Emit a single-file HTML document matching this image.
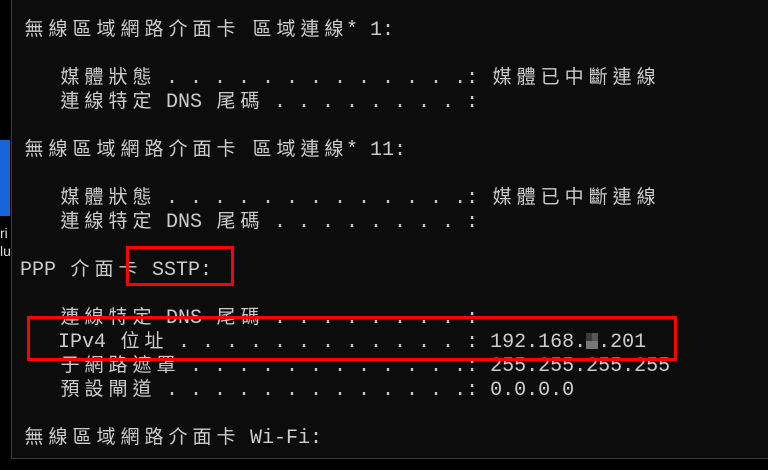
<!DOCTYPE html>
<html><head><meta charset="utf-8"><style>
*{margin:0;padding:0}
body{width:768px;height:470px;background:#000;position:relative;overflow:hidden;font-family:"Liberation Mono",monospace;}
#t{position:absolute;left:11px;top:0;width:757px;height:458px;background:#0c0c0c;border-left:1px solid #3a3a3a;border-bottom:1px solid #3a3a3a;}
.l{position:absolute;left:22px;height:24px;line-height:24px;font-size:20px;color:#cccccc;white-space:pre;}
.c{display:inline-block;width:24px;text-align:center;font-family:"Noto Sans CJK TC","Noto Sans CJK SC",sans-serif;font-size:19px;}
.box{position:absolute;border:3px solid #ff0000;box-sizing:border-box;}
</style></head><body>
<div style="position:absolute;left:0;top:140px;width:10px;height:76px;background:#1565d8"></div>
<div style="position:absolute;left:0;top:224px;font:14px 'Liberation Sans',sans-serif;color:#ddd;line-height:18px">ri<br>lu</div>
<div id="t"></div>
<div class="l" style="top:16px"><span class="c">無</span><span class="c">線</span><span class="c">區</span><span class="c">域</span><span class="c">網</span><span class="c">路</span><span class="c">介</span><span class="c">面</span><span class="c">卡</span> <span class="c">區</span><span class="c">域</span><span class="c">連</span><span class="c">線</span>* 1:</div>
<div class="l" style="top:64px">   <span class="c">媒</span><span class="c">體</span><span class="c">狀</span><span class="c">態</span> . . . . . . . . . . . . .: <span class="c">媒</span><span class="c">體</span><span class="c">已</span><span class="c">中</span><span class="c">斷</span><span class="c">連</span><span class="c">線</span></div>
<div class="l" style="top:88px">   <span class="c">連</span><span class="c">線</span><span class="c">特</span><span class="c">定</span> DNS <span class="c">尾</span><span class="c">碼</span> . . . . . . . . :</div>
<div class="l" style="top:136px"><span class="c">無</span><span class="c">線</span><span class="c">區</span><span class="c">域</span><span class="c">網</span><span class="c">路</span><span class="c">介</span><span class="c">面</span><span class="c">卡</span> <span class="c">區</span><span class="c">域</span><span class="c">連</span><span class="c">線</span>* 11:</div>
<div class="l" style="top:184px">   <span class="c">媒</span><span class="c">體</span><span class="c">狀</span><span class="c">態</span> . . . . . . . . . . . . .: <span class="c">媒</span><span class="c">體</span><span class="c">已</span><span class="c">中</span><span class="c">斷</span><span class="c">連</span><span class="c">線</span></div>
<div class="l" style="top:208px">   <span class="c">連</span><span class="c">線</span><span class="c">特</span><span class="c">定</span> DNS <span class="c">尾</span><span class="c">碼</span> . . . . . . . . :</div>
<div class="l" style="top:256px;left:20px">PPP <span class="c">介</span><span class="c">面</span><span class="c">卡</span> SSTP:</div>
<div class="l" style="top:304px">   <span class="c">連</span><span class="c">線</span><span class="c">特</span><span class="c">定</span> DNS <span class="c">尾</span><span class="c">碼</span> . . . . . . . . :</div>
<div class="l" style="top:328px">   IPv4 <span class="c">位</span><span class="c">址</span> . . . . . . . . . . . . : 192.168. .201</div>
<div style="position:absolute;left:586px;top:333px;width:6px;height:8px;background:#3a3a3a"></div>
<div style="position:absolute;left:586px;top:341px;width:12px;height:8px;background:#777"></div>
<div style="position:absolute;left:592px;top:333px;width:6px;height:8px;background:#555"></div>
<div class="l" style="top:352px">   <span class="c">子</span><span class="c">網</span><span class="c">路</span><span class="c">遮</span><span class="c">罩</span> . . . . . . . . . . . .: 255.255.255.255</div>
<div class="l" style="top:376px">   <span class="c">預</span><span class="c">設</span><span class="c">閘</span><span class="c">道</span> . . . . . . . . . . . . .: 0.0.0.0</div>
<div class="l" style="top:424px"><span class="c">無</span><span class="c">線</span><span class="c">區</span><span class="c">域</span><span class="c">網</span><span class="c">路</span><span class="c">介</span><span class="c">面</span><span class="c">卡</span> Wi-Fi:</div>
<div class="box" style="left:126px;top:246px;width:108px;height:40px"></div>
<div class="box" style="left:27px;top:316px;width:650px;height:45px"></div>
</body></html>
